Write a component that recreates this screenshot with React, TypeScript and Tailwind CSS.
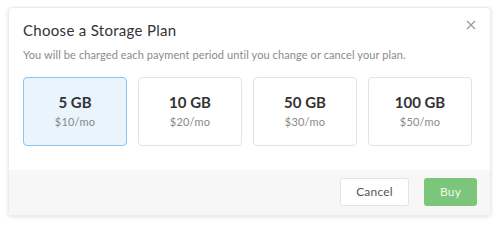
import React from "react";

const plans = [
  { size: "5 GB", price: "$10/mo", selected: true },
  { size: "10 GB", price: "$20/mo" },
  { size: "50 GB", price: "$30/mo" },
  { size: "100 GB", price: "$50/mo" },
];

export default function App() {
  return (
    <div
      className="w-[500px] h-[228px] bg-white pt-[7px] pl-[8px]"
      style={{ fontFamily: "Lato, 'Liberation Sans', sans-serif" }}
    >
      <div className="w-[483px] h-[209px] bg-white rounded-[4px] border border-[#ececec] shadow-[0_1px_4px_rgba(0,0,0,0.12)] flex flex-col overflow-hidden">
        <div className="relative pt-[12px] px-[14px]">
          <div className="text-[15px] leading-[20px] text-[#333] tracking-[0.3px]">Choose a Storage Plan</div>
          <button className="absolute right-[13px] top-[11px] w-[12px] h-[12px] flex items-center justify-center">
            <svg width="10" height="10" viewBox="0 0 10 10" fill="none" stroke="#9a9a9a" strokeWidth="1.2">
              <path d="M1 1L9 9M9 1L1 9" />
            </svg>
          </button>
          <div className="mt-[7px] text-[11px] leading-[16px] text-[#8a8a8a] tracking-[0.1px]">
            You will be charged each payment period until you change or cancel your plan.
          </div>
          <div className="mt-[14px] flex gap-[11px]">
            {plans.map((p) => (
              <div
                key={p.size}
                className={
                  p.selected
                    ? "w-[104px] h-[69px] rounded-[4px] border border-[#8cc4f0] bg-[#eaf4fd] flex flex-col items-center justify-center"
                    : "w-[104px] h-[69px] rounded-[4px] border border-[#e3e3e3] bg-white flex flex-col items-center justify-center"
                }
              >
                <div className="text-[15px] leading-[18px] font-bold text-[#333]">{p.size}</div>
                <div className="mt-[3px] text-[11px] leading-[16px] text-[#888] tracking-[0.2px]">{p.price}</div>
              </div>
            ))}
          </div>
        </div>
        <div className="mt-auto h-[45px] bg-[#f7f7f7] flex items-center justify-end gap-[15px] pr-[13px] pb-[1px]">
          <button className="w-[69px] h-[28px] rounded-[3px] border border-[#e4e4e4] bg-white text-[12px] text-[#555] tracking-[0.2px]">
            Cancel
          </button>
          <button className="w-[53px] h-[28px] rounded-[3px] bg-[#7bc67b] text-[12px] text-[#eef8ee] tracking-[0.2px]">
            Buy
          </button>
        </div>
      </div>
    </div>
  );
}
